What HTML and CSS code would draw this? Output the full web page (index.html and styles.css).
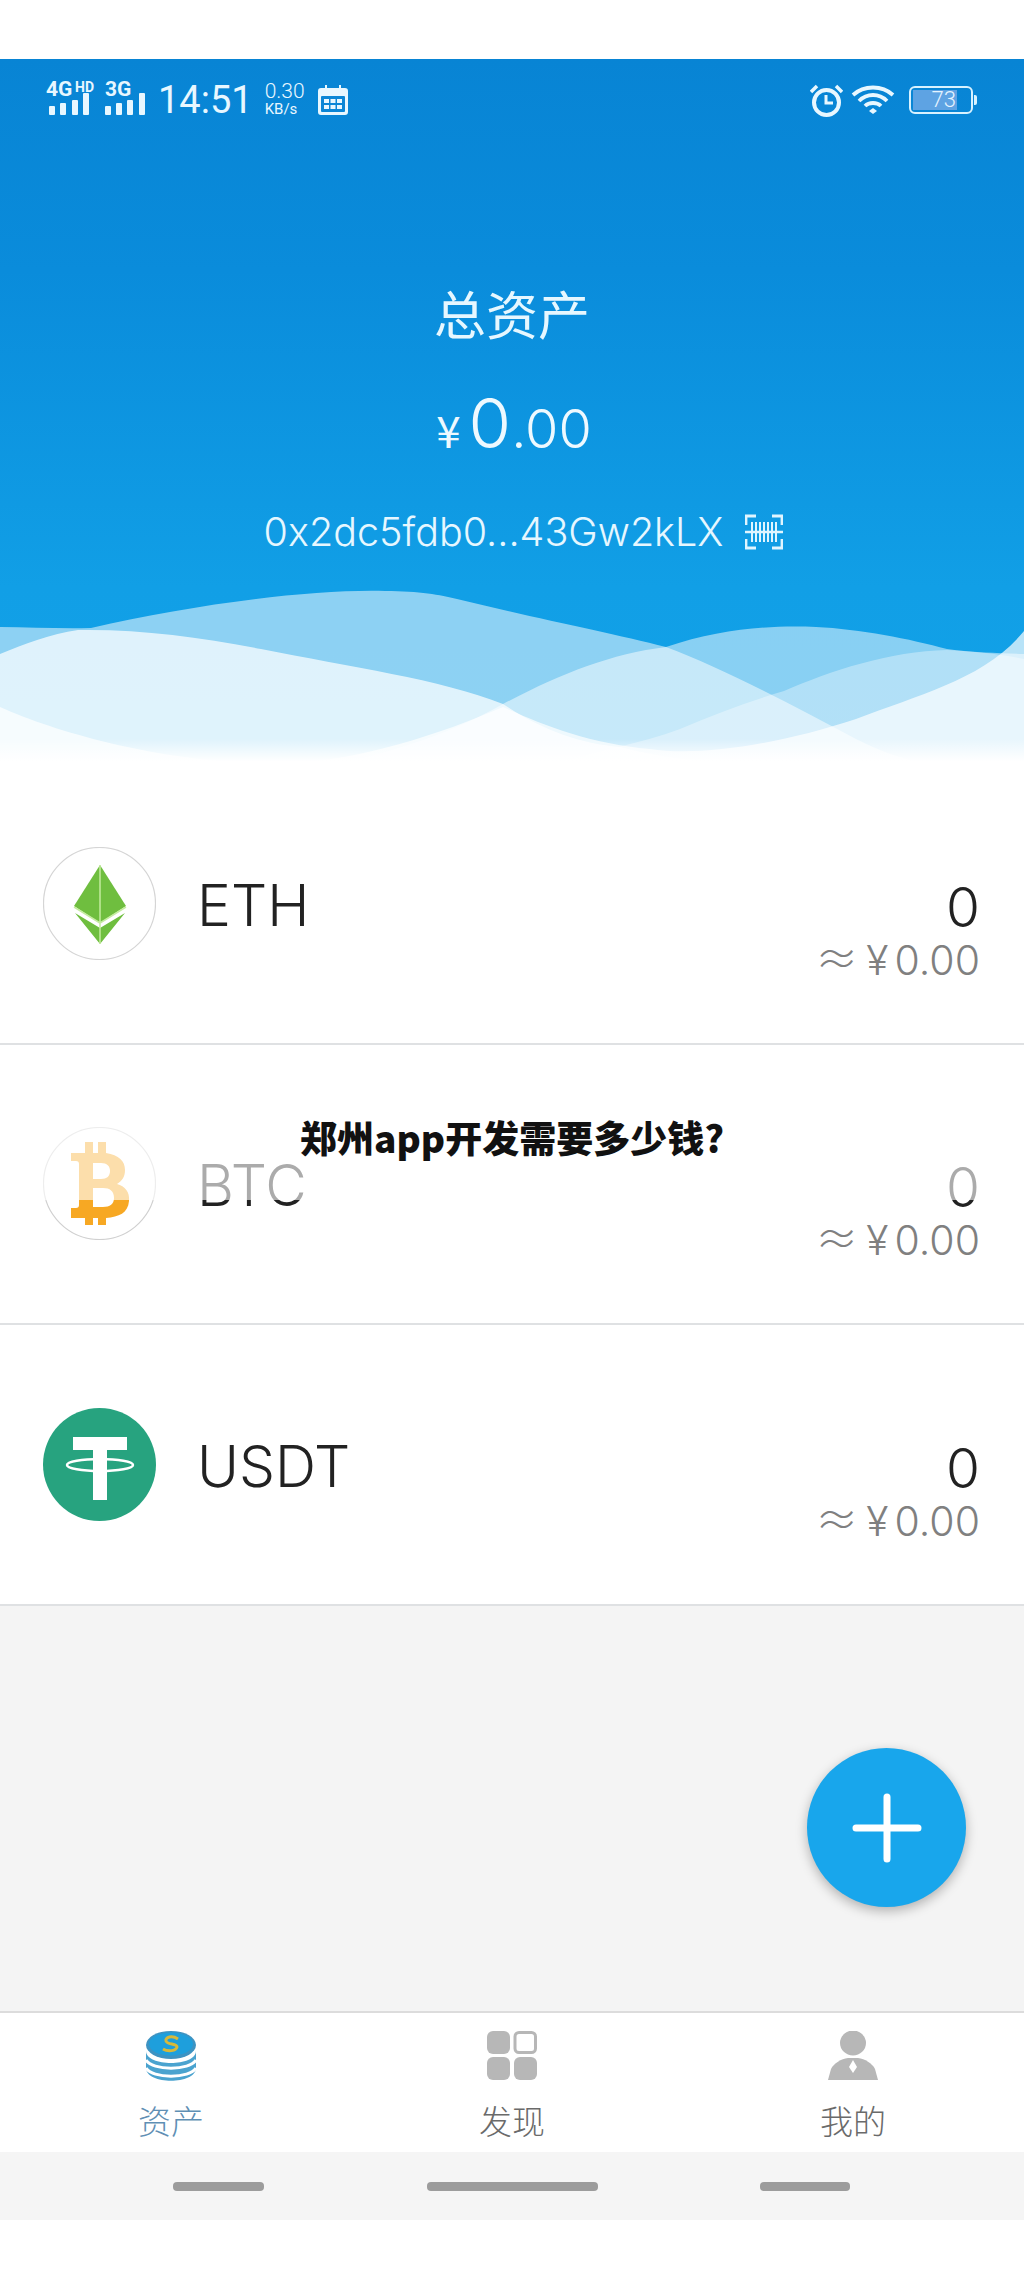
FILE: index.html
```html
<!DOCTYPE html>
<html lang="zh-CN">
<head>
<meta charset="utf-8">
<title>郑州app开发需要多少钱?</title>
<link rel="stylesheet" href="styles.css">
</head>
<body>
<div class="page">
  <div class="top-gap"></div>
  <header class="hero">
    <svg class="waves" viewBox="0 580 1024 185" width="1024" height="185" aria-hidden="true">
      <defs>
        <linearGradient id="fade" x1="0" y1="740" x2="0" y2="765" gradientUnits="userSpaceOnUse">
          <stop offset="0" stop-color="#fff" stop-opacity="0"/>
          <stop offset="0.9" stop-color="#fff" stop-opacity="1"/>
        </linearGradient>
      </defs>
      <path class="w w-a" d="M0 628C30 628 60 630 91 629C190 606 310 590 385 592C420 592 440 596 457 600C530 618 610 634 666 648C720 668 790 705 856 740C880 752 900 760 930 765H0Z"/>
      <path class="w w-b" d="M340 765C400 750 450 735 503 705C560 675 610 655 666 648C720 630 770 626 816 628C860 630 910 640 947 650C975 654 1000 654 1024 655V765Z"/>
      <path class="w w-c" d="M0 655C25 645 50 635 78 631C140 630 200 638 261 650C350 668 440 680 503 705C540 730 580 745 620 748C650 756 680 760 720 765H0Z"/>
      <path class="w w-d" d="M560 765C600 750 640 745 680 730C715 715 750 702 784 692C830 672 890 652 947 651C975 652 1000 655 1024 660V765Z"/>
      <path class="w w-e" d="M0 708C60 735 170 765 280 765C360 762 440 735 503 708C540 725 590 745 650 750C700 758 780 745 856 720C920 695 985 680 1024 632V765H0Z"/>
      <rect x="0" y="740" width="1024" height="25" fill="url(#fade)"/>
    </svg>

    <div class="status">
      <div class="status-left">
        <svg class="signal" width="100" height="40" viewBox="0 -8 100 40" aria-hidden="true">
          <text class="net" x="0" y="12">4G</text>
          <text class="net-sm" x="29" y="8">HD</text>
          <text class="net" x="59" y="12">3G</text>
          <rect x="3" y="22" width="6" height="9" rx="1"/><rect x="14" y="19" width="6" height="12" rx="1"/><rect x="26" y="16" width="6" height="15" rx="1"/><rect x="37" y="9" width="6" height="22" rx="1"/>
          <rect x="59" y="22" width="6" height="9" rx="1"/><rect x="70" y="19" width="6" height="12" rx="1"/><rect x="81" y="16" width="6" height="15" rx="1"/><rect x="93" y="9" width="6" height="22" rx="1"/>
        </svg>
        <span class="time">14:51</span>
        <span class="speed"><span class="speed-num">0.30</span><span class="speed-unit">KB/s</span></span>
        <svg class="cal" width="30" height="30" viewBox="0 0 30 30" aria-hidden="true">
          <path fill="#e8f7ff" d="M3 3H7V0H9V3H21V0H23V3H27A3 3 0 0 1 30 6V27A3 3 0 0 1 27 30H3A3 3 0 0 1 0 27V6A3 3 0 0 1 3 3Z"/>
          <rect x="3" y="11" width="24" height="16" rx="1" fill="#0b86d6"/>
          <path fill="#e8f7ff" d="M6 14H11V18H6ZM12.500 14H17.500V18H12.500ZM19 14H24V18H19ZM6 20H11V24H6ZM12.500 20H17.500V24H12.500ZM19 20H24V24H19Z"/>
        </svg>
      </div>
      <div class="status-right">
        <svg width="33" height="33" viewBox="0 0 33 33" aria-hidden="true" fill="none" stroke="#e8f7ff">
          <circle cx="16.500" cy="18.500" r="12.500" stroke-width="4"/>
          <path d="M16 11V19H23" stroke-width="3"/>
          <path d="M1 8L7 2M32 8L26 2" stroke-width="3.500"/>
        </svg>
        <svg width="44" height="30" viewBox="0 0 44 30" aria-hidden="true" fill="none" stroke="#e8f7ff" stroke-width="3.800">
          <path d="M2 10C13 0 31 0 42 10"/>
          <path d="M8 16C16 8 28 8 36 16"/>
          <path d="M14 21C18 17 26 17 30 21"/>
          <path d="M18 26L22 29L26 26L22 23Z" fill="#e8f7ff" stroke="none"/>
        </svg>
        <div class="battery"><span class="battery-fill"><span class="battery-num">73</span></span></div>
      </div>
    </div>

    <h1 class="total-label">总资产</h1>
    <div class="amount"><span class="yen">¥</span><span class="int">0</span><span class="dec">.00</span></div>
    <div class="address">
      <span>0x2dc5fdb0...43Gw2kLX</span>
      <svg width="38" height="36" viewBox="0 0 38 36" aria-hidden="true" fill="none" stroke="#e0f5ff">
        <path stroke-width="2.800" d="M1 11V2H11M27 2H37V11M1 25V34H11M27 34H37V25"/>
        <path stroke-width="2.500" d="M0 18H38"/>
        <path stroke-width="2" d="M7 8V28M11 8V28M15 8V28M19 8V28M23 8V28M27 8V28M31 8V28"/>
      </svg>
    </div>
  </header>

  <main class="list">
    <section class="row">
      <svg class="coin" width="113" height="113" viewBox="0 0 113 113" aria-hidden="true">
        <circle cx="56.500" cy="56.500" r="56" fill="#fff" stroke="#d5d5d5" stroke-width="1.200"/>
        <path fill="#6fbe3f" d="M57 18L83 59L57 76L31 59Z"/>
        <path fill="#6fbe3f" d="M32 66L57 81L82 66L57 97Z"/>
        <path fill="none" stroke="#c4ec9f" stroke-width="1.500" d="M57 18V97M31 60L57 76L83 60"/>
      </svg>
      <div class="symbol">ETH</div>
      <div class="values"><div class="qty">0</div><div class="fiat"><span class="approx">≈</span><span class="fiat-yen">¥</span>0.00</div></div>
    </section>
    <section class="row">
      <svg class="coin" width="113" height="113" viewBox="0 0 113 113" aria-hidden="true">
        <circle cx="56.500" cy="56.500" r="56" fill="#fff" stroke="#d0d0d0" stroke-width="1.200"/>
        <path fill="#f7a823" fill-rule="evenodd" d="M42 15H50V26H55V15H63V26C76 28 82 34 82 43C82 50 79 54 74 57C82 59 87 65 86 74C85 86 76 90 63 91V98H55V91H50V98H42V91H28V81H33C35 81 36 80 36 78V37C36 35 35 34 33 34H28V26H42ZM50 36V52H58C64 52 67 49 67 44C67 39 64 36 58 36ZM50 61V80H60C67 80 71 77 71 71C71 64 67 61 60 61Z"/>
      </svg>
      <div class="symbol">BTC</div>
      <div class="values"><div class="qty">0</div><div class="fiat"><span class="approx">≈</span><span class="fiat-yen">¥</span>0.00</div></div>
    </section>
    <section class="row">
      <svg class="coin" width="113" height="113" viewBox="0 0 113 113" aria-hidden="true">
        <circle cx="56.500" cy="56.500" r="56.500" fill="#27a37f"/>
        <path fill="#fff" d="M30 29H84V42H64V92H50V42H30Z"/>
        <ellipse cx="57" cy="57" rx="33" ry="6" fill="none" stroke="#fff" stroke-width="2.500"/>
      </svg>
      <div class="symbol">USDT</div>
      <div class="values"><div class="qty">0</div><div class="fiat"><span class="approx">≈</span><span class="fiat-yen">¥</span>0.00</div></div>
    </section>
  </main>

  <div class="filler"></div>

  <nav class="tabs">
    <div class="tab tab-on">
      <svg width="50" height="50" viewBox="0 0 50 50" aria-hidden="true">
        <path fill="#4aa3cf" d="M0 20C0 36 50 36 50 20V37C50 54 0 54 0 37Z"/>
        <path fill="none" stroke="#fff" stroke-width="3" d="M0 29C6 40 44 40 50 29M0 37C6 48 44 48 50 37"/>
        <ellipse cx="25" cy="14" rx="25" ry="14" fill="#3d93c2"/>
        <ellipse cx="25" cy="13" rx="22" ry="11.500" fill="#1e9fdc"/>
        <path fill="none" stroke="#d8b93a" stroke-width="3" d="M32 8C26 4 19 6 20 10C21 14 31 12 31 16C30 20 22 21 17 18"/>
      </svg>
      <span>资产</span>
    </div>
    <div class="tab">
      <svg width="50" height="50" viewBox="0 0 50 50" aria-hidden="true">
        <rect x="0" y="0" width="23" height="23" rx="6" fill="#b7b7b7"/>
        <rect x="28" y="1.500" width="20.500" height="20" rx="4" fill="#fff" stroke="#b7b7b7" stroke-width="3"/>
        <rect x="0" y="26" width="23" height="23" rx="6" fill="#b7b7b7"/>
        <rect x="27" y="26" width="23" height="23" rx="6" fill="#b7b7b7"/>
      </svg>
      <span>发现</span>
    </div>
    <div class="tab">
      <svg width="50" height="50" viewBox="0 0 50 50" aria-hidden="true">
        <ellipse cx="25" cy="12" rx="13" ry="12.500" fill="#b7b7b7"/>
        <path fill="#b7b7b7" d="M0 49L3 38C6 32 13 28 20 27H30C37 28 44 32 47 38L50 49Z"/>
        <path fill="#fff" d="M25 29L29 36L25 42L21 36Z"/>
      </svg>
      <span>我的</span>
    </div>
  </nav>

  <div class="sysnav">
    <i class="pill pill-a"></i><i class="pill pill-b"></i><i class="pill pill-c"></i>
  </div>
  <div class="bottom-gap"></div>

  <div class="banner"><h2 class="banner-title">郑州app开发需要多少钱?</h2></div>
  <button class="fab" aria-label="add"><svg width="70" height="70" viewBox="0 0 70 70" aria-hidden="true"><path d="M35 4V66M4 35H66" stroke="#fff" stroke-width="7" stroke-linecap="round"/></svg></button>
</div>
</body>
</html>
```

FILE: styles.css
```css
* { box-sizing: border-box; }
html, body { margin: 0; padding: 0; background: #fff; }
body { font-family: Inter, "Noto Sans CJK SC", sans-serif; }

.page {
  position: relative;
  width: 1024px;
  height: 2280px;
  overflow: hidden;
  display: flex;
  flex-direction: column;
}

.top-gap { height: 59px; flex: none; background: #fff; }

.hero {
  position: relative;
  height: 705px;
  flex: none;
  background: linear-gradient(180deg, #0884d4 0%, #0a8cdb 30%, #119fe6 75%, #12a2e8 100%);
  color: #e6f7ff;
  display: flex;
  flex-direction: column;
  align-items: center;
}
.waves { position: absolute; left: 0; bottom: 0; display: block; }
.w { fill: #fff; }
.w-a { fill-opacity: .52; }
.w-b { fill-opacity: .5; }
.w-c { fill-opacity: .72; }
.w-d { fill-opacity: .35; }
.w-e { fill-opacity: .7; }

.status {
  position: relative;
  width: 100%;
  height: 34px;
  margin-top: 24px;
  padding: 0 47px 0 46px;
  display: flex;
  justify-content: space-between;
  align-items: center;
}
.status-left { display: flex; align-items: center; }
.status-right { display: flex; align-items: center; gap: 8px; }
.signal { fill: #e8f7ff; display: block; margin-top: -8px; }
.net { font: 700 21px Roboto, sans-serif; }
.net-sm { font: 700 14px Roboto, sans-serif; }
.time { margin-left: 12px; font-family: Roboto, sans-serif; font-size: 38px; line-height: 34px; font-weight: 400; color: #e8f7ff; }
.speed { margin-left: 12px; display: flex; flex-direction: column; align-items: flex-start; font-family: Roboto, sans-serif; color: #e8f7ff; }
.speed-num { font-size: 21px; line-height: 19px; font-weight: 300; }
.speed-unit { font-size: 15px; line-height: 17px; }
.cal { margin-left: 13px; display: block; }

.battery {
  position: relative;
  width: 64px;
  height: 28px;
  margin-left: 6px;
  margin-right: 4px;
  border: 2px solid #d8f2ff;
  border-radius: 6px;
  padding: 2px;
}
.battery::after {
  content: "";
  position: absolute;
  right: -6px;
  top: 7px;
  width: 3px;
  height: 10px;
  background: #d8f2ff;
  border-radius: 0 2px 2px 0;
}
.battery-fill {
  display: flex;
  justify-content: flex-end;
  width: 44px;
  height: 20px;
  background: #5ea3e3;
}
.battery-num { font-family: Roboto, sans-serif; font-size: 22px; line-height: 20px; color: #e6f4ff; font-weight: 300; margin-right: 1px; }

.total-label {
  position: relative;
  margin: 166px 0 0;
  font-size: 52px;
  line-height: 60px;
  font-weight: 400;
  font-family: "Noto Sans CJK SC", sans-serif;
}
.amount {
  position: relative;
  margin-top: 40px;
  padding-left: 4px;
  display: flex;
  align-items: baseline;
  font-weight: 300;
  line-height: 80px;
  height: 80px;
  color: #eef9ff;
}
.yen { font-size: 44px; font-weight: 400; margin-right: 8px; font-family: "Noto Sans CJK SC", sans-serif; }
.int { font-size: 69px; }
.dec { font-size: 54px; }
.address {
  position: relative;
  margin-top: 46px;
  padding-left: 23px;
  display: flex;
  align-items: center;
  gap: 22px;
  font-size: 39.500px;
  line-height: 46px;
  font-weight: 300;
}

.list { flex: none; background: #fff; }
.row {
  height: 280.500px;
  padding: 0 44px 0 43px;
  display: flex;
  align-items: center;
  border-bottom: 2px solid #dfe1e3;
}
.coin { display: block; flex: none; }
.symbol {
  margin-left: 41px;
  margin-top: 5px;
  font-size: 57px;
  line-height: 70px;
  font-weight: 300;
  color: #222;
  flex: 1;
}
.values { text-align: right; margin-top: 53px; }
.qty { font-size: 55px; line-height: 57px; font-weight: 300; color: #222; }
.fiat { font-size: 41px; line-height: 41px; font-weight: 300; color: #808080; }
.approx { font-family: "Noto Sans CJK SC", sans-serif; font-size: 43px; margin-right: 8px; }
.fiat-yen { margin-right: 6px; }

.filler { flex: 1; background: #f4f4f4; }

.tabs {
  flex: none;
  height: 141px;
  background: #fff;
  border-top: 2px solid #dcdcdc;
  display: flex;
  justify-content: space-between;
  padding: 18px 136px 0 136px;
}
.tab {
  width: 70px;
  display: flex;
  flex-direction: column;
  align-items: center;
  font-family: "Noto Sans CJK SC", sans-serif;
  font-size: 33px;
  line-height: 40px;
  font-weight: 300;
  color: #6a6a6a;
}
.tab svg { display: block; margin-bottom: 19px; }
.tab-on { color: #5f8fb4; }

.sysnav {
  flex: none;
  height: 68px;
  background: #f5f5f5;
  position: relative;
  display: flex;
  align-items: center;
  padding: 0 174px 0 173px;
  justify-content: space-between;
}
.pill { display: block; height: 9px; border-radius: 4px; background: #9c9c9c; }
.pill-a { width: 91px; }
.pill-b { width: 171px; }
.pill-c { width: 90px; }

.bottom-gap { height: 60px; flex: none; background: #fff; }

.banner {
  position: absolute;
  left: 0;
  top: 1085px;
  width: 100%;
  height: 115px;
  background: rgba(255, 255, 255, .62);
  display: flex;
  justify-content: center;
  padding-top: 27px;
}
.banner-title {
  margin: 0;
  font-family: "Noto Sans CJK SC", sans-serif;
  font-size: 37px;
  line-height: 50px;
  font-weight: 900;
  color: #111;
}

.fab {
  position: absolute;
  left: 807px;
  top: 1748px;
  width: 159px;
  height: 159px;
  padding: 0;
  border: 0;
  border-radius: 50%;
  background: #18a6ec;
  box-shadow: 0 4px 12px rgba(0, 0, 0, .28);
  display: flex;
  align-items: center;
  justify-content: center;
}
```
